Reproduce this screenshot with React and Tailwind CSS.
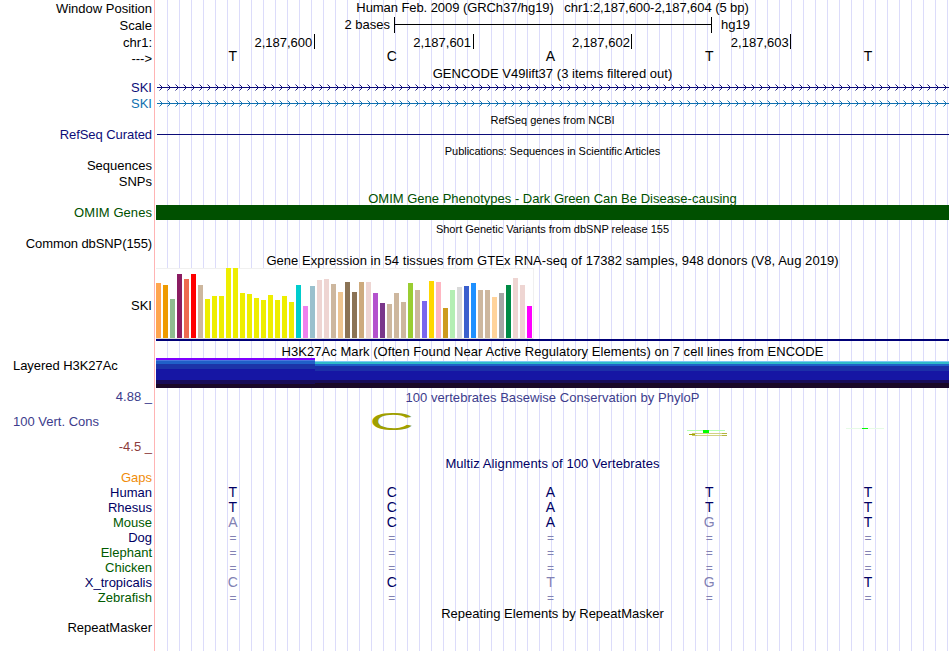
const labels = [
  { text: 'Window Position', className: 'mt-px' },
  { text: 'Scale', className: 'mt-0.5' },
  { text: 'chr1:', className: 'mt-0.5' },
  { text: '--->', className: 'pt-px' },
  { text: 'SKI', className: 'mt-[15px] text-[#0c0c78]' },
  { text: 'SKI', className: 'mt-px text-[#1070b0]' },
  { text: 'RefSeq Curated', className: 'mt-4 text-[#0c0c78] tracking-[-0.07px]' },
  { text: 'Sequences', className: 'mt-4' },
  { text: 'SNPs', className: 'mt-px' },
  { text: 'OMIM Genes', className: 'mt-4 text-[#005000] tracking-[0.06px]' },
  { text: 'Common dbSNP(155)', className: 'mt-4 tracking-[-0.1px]' },
  { text: 'SKI', className: 'mt-[47px]' },
  { text: 'Layered H3K27Ac', className: 'mt-[45px] self-start pl-[13px] tracking-[-0.05px]' },
  { text: '4.88 _', className: 'mt-4 text-[#3c3c8c]' },
  { text: '100 Vert. Cons', className: 'mt-2.5 self-start pl-[13px] text-[#3c3c8c]' },
  { text: '-4.5 _', className: 'mt-2.5 text-[#8c3c3c]' },
  { text: 'Gaps', className: 'mt-4 text-[#f08c0a]' },
  { text: 'Human', className: 'text-[#000064]' },
  { text: 'Rhesus', className: 'text-[#000064]' },
  { text: 'Mouse', className: 'text-[#005a00]' },
  { text: 'Dog', className: 'text-[#000064]' },
  { text: 'Elephant', className: 'text-[#005a00]' },
  { text: 'Chicken', className: 'text-[#005a00]' },
  { text: 'X_tropicalis', className: 'text-[#000064]' },
  { text: 'Zebrafish', className: 'text-[#005a00]' },
  { text: 'RepeatMasker', className: 'mt-[15px]' },
]

const reference = 'TCATT'
const alignments = ['TCATT', 'TCATT', 'ACAGT', '=====', '=====', '=====', 'CCTGT', '=====']
const positions = ['2,187,600', '2,187,601', '2,187,602', '2,187,603']

// [height, color] per tissue
const tissues = [
  [55, '#ffa54f'], [53, '#ee9a00'], [39, '#8fbc8f'], [64, '#8b1c62'], [59, '#ee6a50'], [64, '#ff0000'],
  [53, '#cdb79e'], [39, '#eeee00'], [42, '#eeee00'], [42, '#eeee00'], [70, '#eeee00'], [70, '#eeee00'],
  [45, '#eeee00'], [44, '#eeee00'], [40, '#eeee00'], [38, '#eeee00'], [43, '#eeee00'], [38, '#eeee00'],
  [42, '#eeee00'], [36, '#eeee00'], [53, '#00cdcd'], [32, '#ee82ee'], [52, '#9ac0cd'], [58, '#eed5d2'],
  [59, '#eed5d2'], [54, '#cdb79e'], [46, '#eec591'], [56, '#8b7355'], [46, '#8b7355'], [56, '#cdaa7d'],
  [56, '#eed5d2'], [45, '#b452cd'], [35, '#7a378b'], [34, '#cdb79e'], [45, '#cdb79e'], [36, '#cdb79e'],
  [55, '#9acd32'], [48, '#cdb79e'], [37, '#7a67ee'], [57, '#ffd700'], [56, '#ffb6c1'], [30, '#cd9b1d'],
  [48, '#b4eeb4'], [51, '#d9d9d9'], [52, '#3a5fcd'], [55, '#1e90ff'], [48, '#cdb79e'], [48, '#cdb79e'],
  [41, '#ffd39b'], [45, '#a6a6a6'], [53, '#008b45'], [60, '#eed5d2'], [53, '#eed5d2'], [32, '#ff00ff'],
]

function Title({ children, className = '' }) {
  return <div className={`h-[15px] shrink-0 text-center whitespace-pre ${className}`}>{children}</div>
}

function baseColor(base, expected) {
  if (!expected) return 'text-black'
  return base === expected ? 'text-[#000064]' : 'text-[#8282b4]'
}

function Bases({ bases, match = '' }) {
  return (
    <div className="grid grid-cols-5 w-[794px] h-[15px] shrink-0">
      {bases.split('').map((base, i) => (
        <span
          key={i}
          className={`text-center pr-[5px] ${base === '=' ? 'pt-px text-[12px] leading-[14px]' : 'text-[14px]'} ${baseColor(base, match[i])}`}
        >
          {base}
        </span>
      ))}
    </div>
  )
}

function GeneArrows() {
  const tips = Array.from({ length: 99 }, (_, i) => 6 + i * 8)
  return (
    <svg width="793" height="27" className="block shrink-0" fill="none">
      {[['#0c0c78', 6], ['#1070b0', 22]].map(([color, y]) => (
        <g key={y} stroke={color}>
          <path d={`M1 ${y + 0.5}H793`} />
          {tips.map((x) => (
            <path key={x} d={`M${x - 2.5} ${y - 2.5}l3 3l-3 3`} strokeWidth="0.95" />
          ))}
        </g>
      ))}
    </svg>
  )
}

function Expression() {
  return (
    <div className="shrink-0 border-b-2 border-[#000078]">
      <div className="w-[378px] h-[71px] bg-white border-t border-r border-[#f0f0f0]">
        <div className="flex items-end gap-0.5 h-[70px] -mt-px">
          {tissues.map(([height, color], i) => (
            <div key={i} className="w-[5px] shrink-0" style={{ height, backgroundColor: color }} />
          ))}
        </div>
        <div className="h-px bg-[#d9d9d9]" />
      </div>
    </div>
  )
}

function Histone() {
  return (
    <div className="flex items-end h-[30px] shrink-0">
      <div className="w-[159px]">
        <div className="h-0.5 bg-[#7f00ff]" />
        <div className="h-px bg-[#4a78dc]" />
        <div className="h-[3px] bg-[#2060c8]" />
        <div className="h-[5px] bg-[#1c34a8]" />
        <div className="h-[11px] bg-[#1616a4]" />
        <div className="h-1 bg-[#180c58]" />
        <div className="h-1 bg-[#1a0828]" />
      </div>
      <div className="flex-1">
        <div className="h-px bg-[#7cc8f4]" />
        <div className="h-0.5 bg-[#30bcc8]" />
        <div className="h-0.5 bg-[#2060c8]" />
        <div className="h-[5px] bg-[#1c30a8]" />
        <div className="h-[9px] bg-[#1616a4]" />
        <div className="h-[3px] bg-[#180c58]" />
        <div className="h-[5px] bg-[#1a0828]" />
      </div>
    </div>
  )
}

function Conservation() {
  return (
    <svg width="793" height="45" className="block shrink-0">
      <text transform="translate(213.2 24.7) scale(2.7 1.04)" fontSize="23" fill="#a0a000">C</text>
      <g>
        <rect x="531" y="25" width="38" height="1" fill="#b4ffb4" />
        <rect x="547" y="25" width="6" height="3" fill="#00ff00" />
        <path d="M537 28.5H569M537 30.5H569" stroke="#d2d282" />
        <path d="M566 28.5h5M566 30.5h5" stroke="#b4b43c" />
        <path d="M533 29.5h6" stroke="#a0a000" />
        <path d="M536 28.5h5M536 30.5h5" stroke="#c8c864" />
      </g>
      <g>
        <rect x="690" y="23" width="38" height="1" fill="#e6fae6" />
        <rect x="706" y="23" width="6" height="1" fill="#00ff00" />
      </g>
    </svg>
  )
}

export default function App() {
  return (
    <div className="flex w-[950px] h-[651px] overflow-hidden bg-white text-black text-[13px] leading-[15px] font-['Liberation_Sans',Arial,sans-serif]">
      {/* Track labels */}
      <div className="w-[155px] shrink-0 flex flex-col items-end border-r border-[#ffb4b4]">
        {labels.map(({ text, className }, i) => (
          <div key={i} className={`h-[15px] shrink-0 pr-0.5 whitespace-nowrap ${className}`}>
            {text}
          </div>
        ))}
      </div>

      {/* Tracks */}
      <div className="ml-px w-[793px] shrink-0 flex flex-col bg-[repeating-linear-gradient(to_right,transparent_0px,transparent_11px,#dcdcfa_11px,#dcdcfa_12px)]">
        <Title className="tracking-[-0.07px]">{'Human Feb. 2009 (GRCh37/hg19)   chr1:2,187,600-2,187,604 (5 bp)'}</Title>

        <div className="mt-0.5 flex h-4 shrink-0">
          <span className="w-[238px] pr-1 text-right">2 bases</span>
          <div className="w-[318px] border-x border-black pt-[7px]">
            <div className="h-px bg-black" />
          </div>
          <span className="pl-[9px]">hg19</span>
        </div>

        <div className="grid grid-cols-5 w-[794px] h-4 shrink-0 pt-px">
          {positions.map((pos) => (
            <span key={pos} className="h-[15px] pt-px pr-[1.5px] text-right border-r border-black">
              {pos}
            </span>
          ))}
        </div>
        <Bases bases={reference} />

        <Title className="mt-0.5 tracking-[0.03px]">GENCODE V49lift37 (3 items filtered out)</Title>
        <GeneArrows />

        <Title className="mt-[5px] text-[11px]">RefSeq genes from NCBI</Title>
        <div className="mt-1.5 ml-px h-px shrink-0 bg-[#0c0c78]" />

        <Title className="mt-[9px] text-[11px] tracking-[-0.05px]">Publications: Sequences in Scientific Articles</Title>

        <div className="mt-8 h-3.5 shrink-0 overflow-hidden text-center text-[#005000]">
          OMIM Gene Phenotypes - Dark Green Can Be Disease-causing
        </div>
        <div className="h-[15px] shrink-0 bg-[#005000]" />

        <Title className="mt-0.5 text-[11px]">Short Genetic Variants from dbSNP release 155</Title>

        <Title className="mt-4 tracking-[0.055px]">Gene Expression in 54 tissues from GTEx RNA-seq of 17382 samples, 948 donors (V8, Aug 2019)</Title>
        <Expression />

        <div className="mt-[3px] h-3.5 shrink-0 text-center tracking-[0.05px]">
          H3K27Ac Mark (Often Found Near Active Regulatory Elements) on 7 cell lines from ENCODE
        </div>
        <Histone />

        <Title className="mt-0.5 text-[#3c3c8c] tracking-[0.04px]">100 vertebrates Basewise Conservation by PhyloP</Title>
        <Conservation />

        <Title className="mt-1.5 mb-3.5 text-[#000064] tracking-[0.09px]">Multiz Alignments of 100 Vertebrates</Title>
        {alignments.map((row, i) => (
          <Bases key={i} bases={row} match={reference} />
        ))}

        <Title className="mt-px">Repeating Elements by RepeatMasker</Title>
      </div>
    </div>
  )
}
